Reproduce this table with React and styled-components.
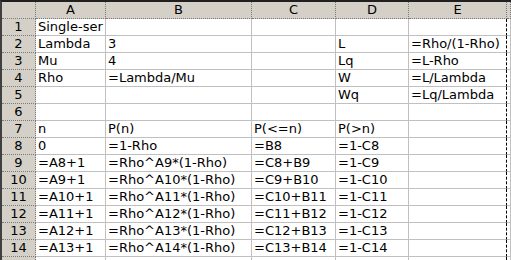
import React from "react";
import styled, { createGlobalStyle } from "styled-components";

const Global = createGlobalStyle`
  html, body { margin: 0; padding: 0; background: #fff; overflow: hidden; }
  body { width: 511px; height: 260px; }
`;

const COLS = [34, 70, 146, 84, 73, 98];
const LETTERS = ["A", "B", "C", "D", "E"];

const Sheet = styled.div`
  width: 511px;
  height: 260px;
  overflow: hidden;
  box-sizing: border-box;
  border-top: 2px solid #202020;
  border-left: 2px solid #404040;
  font-family: "DejaVu Sans", Verdana, sans-serif;
  font-size: 13px;
  color: #000;
`;

const Grid = styled.div`
  display: grid;
  grid-template-columns: ${COLS.map((c) => c + "px").join(" ")} 1fr;
  grid-template-rows: 17px;
  grid-auto-rows: 17px;
`;

const Head = styled.div`
  box-sizing: border-box;
  background: #d4d0c8;
  border-right: 1px dotted #7a7a7a;
  border-bottom: 1px dotted #7a7a7a;
  display: flex;
  align-items: center;
  justify-content: center;
  line-height: 16px;
  white-space: nowrap;
  overflow: hidden;
`;

const Cell = styled.div`
  box-sizing: border-box;
  border-right: ${(p) => (p.$pageBreak ? "1px dashed #000" : "1px solid #c0c0c0")};
  border-bottom: 1px solid #c0c0c0;
  padding-left: 2px;
  line-height: 16px;
  white-space: nowrap;
  overflow: hidden;
  background: #fff;
`;

const data = [
  ["Single-ser", "", "", "", ""],
  ["Lambda", "3", "", "L", "=Rho/(1-Rho)"],
  ["Mu", "4", "", "Lq", "=L-Rho"],
  ["Rho", "=Lambda/Mu", "", "W", "=L/Lambda"],
  ["", "", "", "Wq", "=Lq/Lambda"],
  ["", "", "", "", ""],
  ["n", "P(n)", "P(<=n)", "P(>n)", ""],
  ["0", "=1-Rho", "=B8", "=1-C8", ""],
];
for (let r = 9; r <= 14; r++) {
  data.push([
    `=A${r - 1}+1`,
    `=Rho^A${r}*(1-Rho)`,
    `=C${r - 1}+B${r}`,
    `=1-C${r}`,
    "",
  ]);
}
data.push(["", "", "", "", ""]);

export default function App() {
  return (
    <>
      <Global />
      <Sheet>
        <Grid>
          <Head />
          {LETTERS.map((l) => (
            <Head key={l}>{l}</Head>
          ))}
          <Head />
          {data.map((row, i) => (
            <React.Fragment key={i}>
              <Head>{i < 14 ? i + 1 : ""}</Head>
              {row.map((v, j) => (
                <Cell key={j} $pageBreak={j === 4}>
                  {v}
                </Cell>
              ))}
              <Cell />
            </React.Fragment>
          ))}
        </Grid>
      </Sheet>
    </>
  );
}
